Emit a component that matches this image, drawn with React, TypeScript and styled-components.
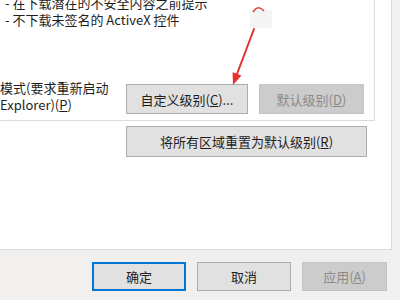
import React from "react";
import styled, { createGlobalStyle } from "styled-components";

const Global = createGlobalStyle`
  html, body { margin: 0; padding: 0; }
  body {
    width: 400px;
    height: 300px;
    overflow: hidden;
    background: #f0f0f0;
    font-family: "Noto Sans CJK SC", "Noto Sans", sans-serif;
    font-size: 13px;
    color: #1e1e1e;
  }
`;

const Dialog = styled.div`
  position: relative;
  width: 400px;
  height: 300px;
  display: flex;
  flex-direction: column;
  background: #f1f0ef;
`;

const TabPage = styled.div`
  width: 392px;
  height: 250px;
  background: #ffffff;
  border-right: 1px solid #dadada;
  border-bottom: 1px solid #dadada;
  box-sizing: border-box;
  display: flex;
  flex-direction: column;
`;

const Group = styled.div`
  width: 375px;
  height: 121px;
  box-sizing: border-box;
  border-right: 1px solid #dcdcdc;
  border-bottom: 1px solid #dcdcdc;
  display: flex;
  flex-direction: column;
`;

const BulletList = styled.div`
  margin-top: -6px;
  padding-left: 5px;
  line-height: 17px;
  white-space: nowrap;
`;

const SettingsRow = styled.div`
  margin-top: 51px;
  display: flex;
  align-items: flex-start;
`;

const Label = styled.div`
  width: 126px;
  line-height: 17px;
  white-space: nowrap;
`;

const Button = styled.div<{ $w: number; $h?: number; $disabled?: boolean; $default?: boolean }>`
  width: ${(p) => p.$w}px;
  height: ${(p) => p.$h ?? 30}px;
  box-sizing: border-box;
  display: flex;
  align-items: center;
  justify-content: center;
  white-space: nowrap;
  background: ${(p) => (p.$disabled ? "#cccccc" : "#e1e1e1")};
  color: ${(p) => (p.$disabled ? "#8a8a8a" : "#1e1e1e")};
  border: ${(p) =>
    p.$default ? "2px solid #0078d7" : p.$disabled ? "1px solid #c4c4c4" : "1px solid #adadad"};
`;

const ButtonPair = styled.div`
  margin-top: 5px;
  display: flex;
  gap: 11px;
`;

const ResetRow = styled.div`
  margin-top: 5px;
  padding-left: 126px;
  display: flex;
`;

const Footer = styled.div`
  padding-top: 12px;
  padding-left: 92px;
  display: flex;
  gap: 11px;
`;

const Overlay = styled.svg`
  position: absolute;
  left: 0;
  top: 0;
  pointer-events: none;
`;

export default function App() {
  return (
    <>
      <Global />
      <Dialog>
        <TabPage>
          <Group>
            <BulletList>
              <div>- 在下载潜在的不安全内容之前提示</div>
              <div>- 不下载未签名的 ActiveX 控件</div>
            </BulletList>
            <SettingsRow>
              <Label>
                <div>模式(要求重新启动</div>
                <div>Explorer)(<u>P</u>)</div>
              </Label>
              <ButtonPair>
                <Button $w={122}>自定义级别(<u>C</u>)...</Button>
                <Button $w={105} $disabled>默认级别(<u>D</u>)</Button>
              </ButtonPair>
            </SettingsRow>
          </Group>
          <ResetRow>
            <Button $w={241} $h={31}>将所有区域重置为默认级别(<u>R</u>)</Button>
          </ResetRow>
        </TabPage>
        <Footer>
          <Button $w={94} $h={29} $default>确定</Button>
          <Button $w={94} $h={29}>取消</Button>
          <Button $w={85} $h={29} $disabled>应用(<u>A</u>)</Button>
        </Footer>
        <Overlay width="400" height="300" viewBox="0 0 400 300">
          <rect x="250" y="10" width="22" height="18" fill="#f5f5f5" />
          <path d="M253 12 Q258 4 264 11" fill="none" stroke="#e0453f" strokeWidth="1.5" />
          <line x1="254" y1="29" x2="237" y2="74" stroke="#e5302c" strokeWidth="2" strokeLinecap="round" />
          <polygon points="233,85 241.4,75.4 232.6,72.2" fill="#e5302c" />
        </Overlay>
      </Dialog>
    </>
  );
}
